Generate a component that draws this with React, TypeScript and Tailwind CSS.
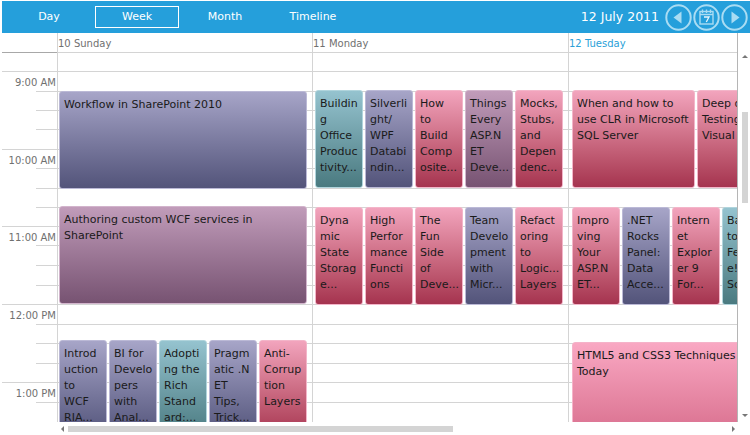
const rows = [
  { h: "h-[19px]", full: true, dark: true },
  { h: "h-[20px]", full: true, label: "9:00 AM" },
  { h: "h-[19px]" },
  { h: "h-[19px]" },
  { h: "h-[20px]" },
  { h: "h-[19px]", full: true, label: "10:00 AM" },
  { h: "h-[20px]" },
  { h: "h-[19px]" },
  { h: "h-[19px]" },
  { h: "h-[19px]", full: true, label: "11:00 AM" },
  { h: "h-[20px]" },
  { h: "h-[20px]" },
  { h: "h-[19px]" },
  { h: "h-[20px]", full: true, label: "12:00 PM" },
  { h: "h-[19px]" },
  { h: "h-[20px]" },
  { h: "h-[19px]" },
  { h: "h-[20px]", full: true, label: "1:00 PM" },
  { h: "h-[20px]" },
];

const tones = {
  pink: "from-[#f2a4bd] to-[#a5334f] border-[#f3b5c9]",
  blue: "from-[#a7a5c8] to-[#53547a] border-[#bbb9d6]",
  teal: "from-[#95c3cf] to-[#4a7a80] border-[#b0d4dc]",
  mauve: "from-[#c19cba] to-[#775372] border-[#d2b4cc]",
  hot: "from-[#f9a8c3] to-[#cf5f80] border-[#f5b3c9]",
};

type Tone = keyof typeof tones;
type Item = { box: string; tone: Tone; text: string };

const sunday: Item[] = [
  { box: "left-[1px] top-[39px] w-[248px] h-[98px]", tone: "blue", text: "Workflow in SharePoint 2010" },
  { box: "left-[1px] top-[154px] w-[248px] h-[98px]", tone: "mauve", text: "Authoring custom WCF services in\nSharePoint" },
  { box: "left-[1px] top-[288px] w-[48px] h-[98px]", tone: "blue", text: "Introd\nuction\nto\nWCF\nRIA..." },
  { box: "left-[51px] top-[288px] w-[48px] h-[98px]", tone: "blue", text: "BI for\nDevelo\npers\nwith\nAnal..." },
  { box: "left-[101px] top-[288px] w-[48px] h-[98px]", tone: "teal", text: "Adopti\nng the\nRich\nStand\nard:..." },
  { box: "left-[151px] top-[288px] w-[48px] h-[98px]", tone: "blue", text: "Pragm\natic .N\nET\nTips,\nTrick..." },
  { box: "left-[201px] top-[288px] w-[48px] h-[98px]", tone: "pink", text: "Anti-\nCorrup\ntion\nLayers" },
];

const monday: Item[] = [
  { box: "left-[2px] top-[38px] w-[48px] h-[98px]", tone: "teal", text: "Buildin\ng\nOffice\nProduc\ntivity..." },
  { box: "left-[52px] top-[38px] w-[48px] h-[98px]", tone: "blue", text: "Silverli\nght/\nWPF\nDatabi\nndin..." },
  { box: "left-[102px] top-[38px] w-[48px] h-[98px]", tone: "pink", text: "How\nto\nBuild\nComp\nosite..." },
  { box: "left-[152px] top-[38px] w-[48px] h-[98px]", tone: "mauve", text: "Things\nEvery\nASP.N\nET\nDeve..." },
  { box: "left-[202px] top-[38px] w-[48px] h-[98px]", tone: "pink", text: "Mocks,\nStubs,\nand\nDepen\ndenc..." },
  { box: "left-[2px] top-[155px] w-[48px] h-[98px]", tone: "pink", text: "Dyna\nmic\nState\nStorag\ne..." },
  { box: "left-[52px] top-[155px] w-[48px] h-[98px]", tone: "pink", text: "High\nPerfor\nmance\nFuncti\nons" },
  { box: "left-[102px] top-[155px] w-[48px] h-[98px]", tone: "pink", text: "The\nFun\nSide\nof\nDeve..." },
  { box: "left-[152px] top-[155px] w-[48px] h-[98px]", tone: "blue", text: "Team\nDevelo\npment\nwith\nMicr..." },
  { box: "left-[202px] top-[155px] w-[48px] h-[98px]", tone: "pink", text: "Refact\noring\nto\nLogic...\nLayers" },
];

const tuesday: Item[] = [
  { box: "left-[3px] top-[38px] w-[123px] h-[98px]", tone: "pink", text: "When and how to\nuse CLR in Microsoft\nSQL Server" },
  { box: "left-[128px] top-[38px] w-[123px] h-[98px]", tone: "pink", text: "Deep dive\nTesting in\nVisual" },
  { box: "left-[3px] top-[155px] w-[48px] h-[98px]", tone: "pink", text: "Impro\nving\nYour\nASP.N\nET..." },
  { box: "left-[53px] top-[155px] w-[48px] h-[98px]", tone: "blue", text: ".NET\nRocks\nPanel:\nData\nAcce..." },
  { box: "left-[103px] top-[155px] w-[48px] h-[98px]", tone: "pink", text: "Intern\net\nExplor\ner 9\nFor..." },
  { box: "left-[153px] top-[155px] w-[48px] h-[98px]", tone: "teal", text: "Back\nto\nFeatur\ne!\nSo..." },
  { box: "left-[3px] top-[290px] w-[248px] h-[120px]", tone: "hot", text: "HTML5 and CSS3 Techniques\nToday" },
];

const days = [
  { title: "10 Sunday", items: sunday, width: "w-[255px]", color: "text-[#707070]" },
  { title: "11 Monday", items: monday, width: "w-[256px]", color: "text-[#707070]" },
  { title: "12 Tuesday", items: tuesday, width: "w-[169px]", color: "text-[#2a9fd8]" },
];

function Tab({ label, active }: { label: string; active?: boolean }) {
  return (
    <div
      className={
        active
          ? "flex h-[22px] w-[84px] items-center justify-center border border-white text-white"
          : "flex h-[22px] w-[84px] items-center justify-center border border-transparent text-white"
      }
    >
      {label}
    </div>
  );
}

function RoundButton({ children }: { children: React.ReactNode }) {
  return (
    <svg width="27" height="27" viewBox="0 0 27 27" fill="none" className="shrink-0">
      <circle cx="13.5" cy="13.5" r="12.2" stroke="#a9dcf3" strokeWidth="2" />
      {children}
    </svg>
  );
}

function DayColumn({ items, width }: { items: Item[]; width: string }) {
  return (
    <div className={`relative ${width} shrink-0 overflow-hidden border-l border-[#d4d4d4]`}>
      {rows.map((row, i) => (
        <div key={i} className={`${row.h} border-t border-[#d4d4d4]`} />
      ))}
      {items.map((item) => (
        <div
          key={item.text}
          className={`absolute ${item.box} ${tones[item.tone]} overflow-hidden whitespace-pre rounded-[3px] border bg-linear-to-b pl-[4px] pt-[5px] text-[11px] leading-[16px] text-[#1a1a1a]`}
        >
          {item.text}
        </div>
      ))}
    </div>
  );
}

export default function App() {
  return (
    <div className="flex h-[435px] w-[750px] flex-col overflow-hidden bg-white pl-[2px] pt-[1px] font-['DejaVu_Sans',sans-serif]">
      <header className="flex h-[32px] shrink-0 items-center bg-[#259fdb] pl-[5px] text-[11px]">
        <div className="flex gap-[4px]">
          <Tab label="Day" />
          <Tab label="Week" active />
          <Tab label="Month" />
          <Tab label="Timeline" />
        </div>
        <div className="ml-auto flex items-center">
          <span className="mr-[6px] text-[12.5px] text-white">12 July 2011</span>
          <RoundButton>
            <path d="M16.5 7.5v12l-8-6z" fill="#a9dcf3" />
          </RoundButton>
          <div className="ml-[1px]">
            <RoundButton>
              <rect x="7" y="7.5" width="13" height="12.5" stroke="#a9dcf3" strokeWidth="1.4" />
              <path d="M7 10.5h13M9.5 5.5v3.5M13.5 5.5v3.5M17.5 5.5v3.5" stroke="#a9dcf3" strokeWidth="1.4" />
              <path d="M11 13h5l-2.7 5" stroke="#e6f5fc" strokeWidth="1.3" />
            </RoundButton>
          </div>
          <div className="ml-[1px] mr-[2px]">
            <RoundButton>
              <path d="M10.5 7.5v12l8-6z" fill="#a9dcf3" />
            </RoundButton>
          </div>
        </div>
      </header>

      <div className="flex h-[389px] shrink-0">
        <div className="flex w-[736px] shrink-0 flex-col overflow-hidden border-r border-[#b5b5b5]">
          <div className="flex h-[19px] shrink-0 text-[10px] leading-[21px]">
            <div className="w-[55px] shrink-0" />
            {days.map((day) => (
              <div key={day.title} className={`${day.width} shrink-0 border-l border-[#d4d4d4] ${day.color}`}>
                {day.title}
              </div>
            ))}
          </div>
          <div className="flex h-[370px] shrink-0">
            <div className="w-[55px] shrink-0 text-[#707070]">
              {rows.map((row, i) => (
                <div key={i} className={`${row.h} flex justify-end`}>
                  <div
                    className={`${row.full ? "w-full" : "w-[21px]"} ${i === 0 ? "border-[#a8a8a8]" : "border-[#d4d4d4]"} relative border-t`}
                  >
                    {row.label ? (
                      <span className="absolute right-[1px] top-0 whitespace-nowrap text-[10px] leading-[21px]">
                        {row.label}
                      </span>
                    ) : null}
                  </div>
                </div>
              ))}
            </div>
            {days.map((day) => (
              <DayColumn key={day.title} items={day.items} width={day.width} />
            ))}
          </div>
        </div>
        <div className="flex w-[12px] shrink-0 flex-col items-center pl-[1px] pt-[22px]">
          <div className="h-0 w-0 border-x-[3px] border-b-[3px] border-x-transparent border-b-[#777]" />
          <div className="mt-[54px] h-[91px] w-[6px] bg-[#d4d4d4]" />
          <div className="mt-auto mb-[5px] h-0 w-0 border-x-[3px] border-t-[3px] border-x-transparent border-t-[#777]" />
        </div>
      </div>

      <div className="flex h-[13px] shrink-0 items-center pl-[59px]">
        <div className="h-0 w-0 border-y-[3px] border-r-[3px] border-y-transparent border-r-[#777]" />
        <div className="ml-[4px] h-[6px] w-[385px] bg-[#d4d4d4]" />
        <div className="ml-[279px] h-0 w-0 border-y-[3px] border-l-[3px] border-y-transparent border-l-[#777]" />
      </div>
    </div>
  );
}
